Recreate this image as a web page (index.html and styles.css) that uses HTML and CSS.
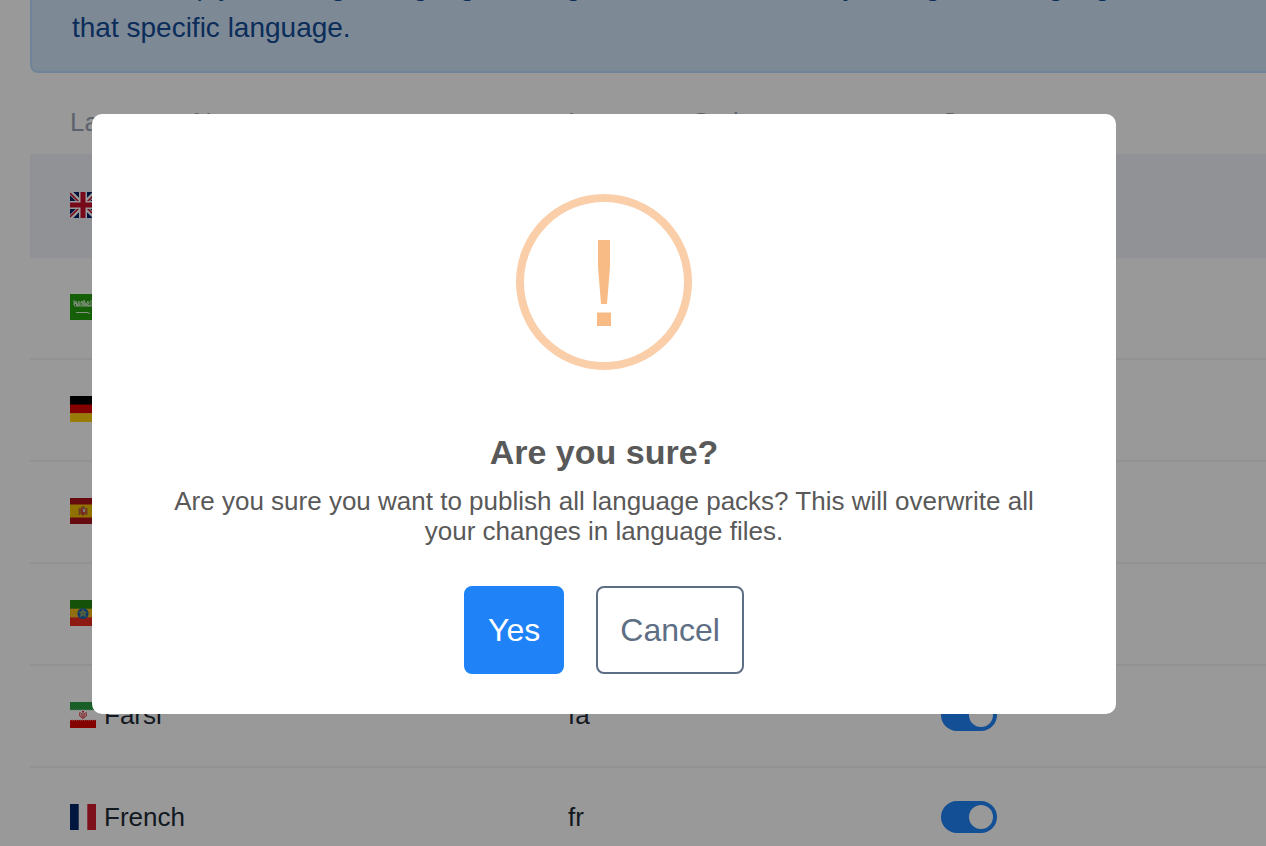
FILE: index.html
```html
<!DOCTYPE html>
<html lang="en">
<head>
<meta charset="utf-8">
<title>Language packs</title>
<link rel="stylesheet" href="styles.css">
</head>
<body>
<main class="page">
  <p class="alert">Users simply add single language settings and all its users only change the language files for<br>that specific language.</p>
  <table class="languages">
    <thead>
      <tr><th class="col-name">Language Name</th><th class="col-code">Language Code</th><th>Status</th></tr>
    </thead>
    <tbody>
      <tr class="current">
        <td><div class="name"><svg class="flag" viewBox="0 0 26 26"><path fill="#012169" d="M0 0h26v26H0z"/><path stroke="#fff" stroke-width="4.5" d="M0 0l26 26M26 0L0 26"/><path stroke="#c8102e" stroke-width="1.6" d="M0 1l10 10M26 1L16 11M0 25l10-10M26 25L16 15"/><path stroke="#fff" stroke-width="8" d="M13 0v26M0 13h26"/><path stroke="#c8102e" stroke-width="5" d="M13 0v26M0 13h26"/></svg>English</div></td>
        <td>en</td><td></td>
      </tr>
      <tr>
        <td><div class="name"><svg class="flag" viewBox="0 0 26 26"><path fill="#249e0e" d="M0 0h26v26H0z"/><path fill="none" stroke="#d3efcc" stroke-width="1" d="M4 6v5l2-4 1 5 2-5v4h3V7l2 5V6l2 5 2-4v5l3-1V6M4 8l4 4 4-5 4 5 4-4M4 12h18"/><path fill="none" stroke="#e3f5df" d="M6 18.500h11l3 1"/></svg>Arabic</div></td>
        <td>ar</td><td><input class="toggle" type="checkbox" aria-label="Arabic" checked></td>
      </tr>
      <tr>
        <td><div class="name"><svg class="flag" viewBox="0 0 26 26"><path d="M0 0h26v9H0z"/><path fill="#dd0000" d="M0 8.500h26v9H0z"/><path fill="#ffce12" d="M0 17.300h26V26H0z"/></svg>German</div></td>
        <td>de</td><td><input class="toggle" type="checkbox" aria-label="German" checked></td>
      </tr>
      <tr>
        <td><div class="name"><svg class="flag" viewBox="0 0 26 26"><path fill="#aa151b" d="M0 0h26v26H0z"/><path fill="#f1bf00" d="M0 6.500h26v13H0z"/><path fill="#b76a3e" d="M8.500 10h2v7h-2zM15.500 10h2v7h-2zM11 9l2-1 2 1v2h-4z"/><path fill="#c34b37" d="M10.500 11h5v4.500L13 18l-2.500-2.500z"/><path fill="#d5c6cf" d="M13 11h2v3h-2z"/></svg>Spanish</div></td>
        <td>es</td><td><input class="toggle" type="checkbox" aria-label="Spanish" checked></td>
      </tr>
      <tr>
        <td><div class="name"><svg class="flag" viewBox="0 0 26 26"><path fill="#268710" d="M0 0h26v9H0z"/><path fill="#f2b71c" d="M0 8.700h26v9H0z"/><path fill="#ec2b20" d="M0 17.300h26V26H0z"/><circle cx="13" cy="13.500" r="5.600" fill="#1b67ad"/><path fill="none" stroke="#c3bd55" stroke-width=".8" d="M13 9.500l2.500 7-6-4.300h7l-6 4.300z"/></svg>Amharic</div></td>
        <td>am</td><td><input class="toggle" type="checkbox" aria-label="Amharic" checked></td>
      </tr>
      <tr>
        <td><div class="name"><svg class="flag" viewBox="0 0 26 26"><path fill="#fff" d="M0 0h26v26H0z"/><path fill="#2a9b41" d="M0 0h26v8H0z"/><path fill="#dc0808" d="M0 18h26v8H0z"/><path stroke="#a5ccb0" stroke-dasharray="1 1" d="M0 8h26"/><path stroke="#f3bcbc" stroke-dasharray="1 1" d="M0 18h26"/><path fill="none" stroke="#dc2929" stroke-width="1" d="M13 9v8M10.500 10c-2 2-1 5 2 6M15.500 10c2 2 1 5-2 6M11.500 11c-1 2 0 3 1 4M14.500 11c1 2 0 3-1 4M12 9.500h2"/></svg>Farsi</div></td>
        <td>fa</td><td><input class="toggle" type="checkbox" aria-label="Farsi" checked></td>
      </tr>
      <tr>
        <td><div class="name"><svg class="flag" viewBox="0 0 26 26"><path fill="#fff" d="M0 0h26v26H0z"/><path fill="#00266a" d="M0 0h8.700v26H0z"/><path fill="#d01b2d" d="M17.300 0H26v26h-8.700z"/></svg>French</div></td>
        <td>fr</td><td><input class="toggle" type="checkbox" aria-label="French" checked></td>
      </tr>
    </tbody>
  </table>
</main>
<div class="overlay">
  <section class="dialog" role="dialog" aria-modal="true" aria-labelledby="dialog-title">
    <svg class="warning" viewBox="0 0 176 176" aria-hidden="true"><circle cx="88" cy="88" r="84" fill="none" stroke="#facea8" stroke-width="8"/><path fill="#f8bb86" d="M82 46h12v27l-3 37h-6l-3-37zM81 118.500h14V132H81z"/></svg>
    <h2 class="title" id="dialog-title">Are you sure?</h2>
    <p class="message">Are you sure you want to publish all language packs? This will overwrite all your changes in language files.</p>
    <div class="actions">
      <button class="button primary" type="button">Yes</button>
      <button class="button secondary" type="button">Cancel</button>
    </div>
  </section>
</div>
</body>
</html>
```
FILE: styles.css
```css
* {
  box-sizing: border-box;
}

body {
  margin: 0;
  height: 100vh;
  overflow: hidden;
  background: #fff;
  color: #212b36;
  font: 26px/30px "Liberation Sans", Arial, sans-serif;
}

.page {
  padding-left: 30px;
}

.alert {
  margin: -71px 0 0;
  padding: 34px 0 22px 40px;
  border: 2px solid #bbdaff;
  border-right: 0;
  border-radius: 8px 0 0 8px;
  background: #d2e5fb;
  color: #114b96;
  font-size: 28px;
  line-height: 42px;
  white-space: nowrap;
}

.languages {
  width: 100%;
  border-collapse: separate;
  border-spacing: 0;
  table-layout: fixed;
}

.languages th {
  height: 81px;
  padding: 16px 0 0 40px;
  color: #9ba4b5;
  font-weight: normal;
  text-align: left;
}

.languages td {
  height: 102px;
  padding: 0 0 2px 40px;
  border-bottom: 2px solid #f1f2f4;
}

.languages .col-name {
  width: 498px;
}

.languages .col-code {
  width: 373px;
}

.languages .current td {
  height: 104px;
  border-top: 2px solid #f1f4f8;
  border-bottom-color: #f1f4f8;
  background: #f1f4f8;
}

.name {
  display: flex;
  align-items: center;
  gap: 8px;
}

.flag {
  width: 26px;
  height: 26px;
}

.toggle {
  appearance: none;
  display: flex;
  justify-content: flex-end;
  width: 56px;
  height: 32px;
  margin: 0;
  padding: 4px;
  border-radius: 16px;
  background: #2084f7;
}

.toggle::before {
  content: "";
  width: 24px;
  height: 24px;
  border-radius: 50%;
  background: #fff;
}

.overlay {
  position: fixed;
  inset: 0;
  display: flex;
  align-items: flex-start;
  justify-content: center;
  padding: 114px 58px 0 0;
  background: rgba(0, 0, 0, 0.4);
}

.dialog {
  display: flex;
  flex-direction: column;
  align-items: center;
  width: 1024px;
  padding: 80px 72px 40px;
  border-radius: 10px;
  background: #fff;
  color: #595959;
  text-align: center;
}

.warning {
  width: 176px;
  height: 176px;
}

.title {
  margin: 62px 0 14px;
  font-size: 34px;
  line-height: 40px;
}

.message {
  margin: 0 0 40px;
}

.actions {
  display: flex;
  gap: 32px;
}

.button {
  height: 88px;
  padding: 0 22px;
  border: 2px solid;
  border-radius: 8px;
  font: 32px/40px "Liberation Sans", Arial, sans-serif;
}

.primary {
  border-color: #1f83f7;
  background: #1f83f7;
  color: #fff;
}

.secondary {
  border-color: #5e6e84;
  background: #fff;
  color: #5e6e84;
}
```
